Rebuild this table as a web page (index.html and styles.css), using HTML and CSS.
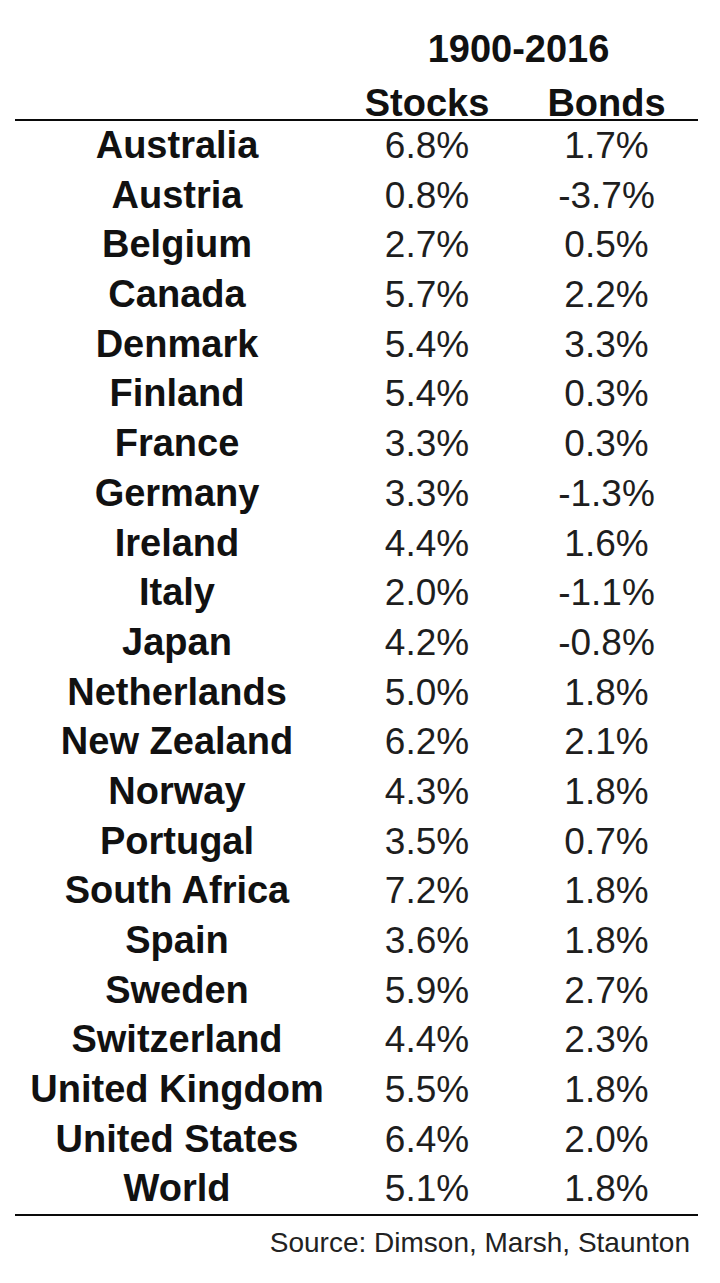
FILE: index.html
```html
<!DOCTYPE html>
<html lang="en">
<head>
<meta charset="utf-8">
<title>Real returns 1900-2016</title>
<link rel="stylesheet" href="styles.css">
</head>
<body>
<div class="sheet">
  <div class="head">
    <div class="period">1900-2016</div>
    <div class="colname">Stocks</div>
    <div class="colname">Bonds</div>
  </div>
  <div class="body">
    <div class="country">Australia</div><div class="val">6.8%</div><div class="val">1.7%</div>
    <div class="country">Austria</div><div class="val">0.8%</div><div class="val">-3.7%</div>
    <div class="country">Belgium</div><div class="val">2.7%</div><div class="val">0.5%</div>
    <div class="country">Canada</div><div class="val">5.7%</div><div class="val">2.2%</div>
    <div class="country">Denmark</div><div class="val">5.4%</div><div class="val">3.3%</div>
    <div class="country">Finland</div><div class="val">5.4%</div><div class="val">0.3%</div>
    <div class="country">France</div><div class="val">3.3%</div><div class="val">0.3%</div>
    <div class="country">Germany</div><div class="val">3.3%</div><div class="val">-1.3%</div>
    <div class="country">Ireland</div><div class="val">4.4%</div><div class="val">1.6%</div>
    <div class="country">Italy</div><div class="val">2.0%</div><div class="val">-1.1%</div>
    <div class="country">Japan</div><div class="val">4.2%</div><div class="val">-0.8%</div>
    <div class="country">Netherlands</div><div class="val">5.0%</div><div class="val">1.8%</div>
    <div class="country">New Zealand</div><div class="val">6.2%</div><div class="val">2.1%</div>
    <div class="country">Norway</div><div class="val">4.3%</div><div class="val">1.8%</div>
    <div class="country">Portugal</div><div class="val">3.5%</div><div class="val">0.7%</div>
    <div class="country">South Africa</div><div class="val">7.2%</div><div class="val">1.8%</div>
    <div class="country">Spain</div><div class="val">3.6%</div><div class="val">1.8%</div>
    <div class="country">Sweden</div><div class="val">5.9%</div><div class="val">2.7%</div>
    <div class="country">Switzerland</div><div class="val">4.4%</div><div class="val">2.3%</div>
    <div class="country">United Kingdom</div><div class="val">5.5%</div><div class="val">1.8%</div>
    <div class="country">United States</div><div class="val">6.4%</div><div class="val">2.0%</div>
    <div class="country">World</div><div class="val">5.1%</div><div class="val">1.8%</div>
  </div>
  <div class="source">Source: Dimson, Marsh, Staunton</div>
</div>
</body>
</html>
```
FILE: styles.css
```css
html, body {
  margin: 0;
  padding: 0;
  background: #ffffff;
}

.sheet {
  width: 683px;
  margin-left: 15px;
  padding-top: 25px;
  font-family: "Liberation Sans", Arial, sans-serif;
  color: #111111;
}

.head {
  display: grid;
  grid-template-columns: 324px 176px 183px;
  row-gap: 14px;
  font-weight: bold;
  font-size: 38px;
  text-align: center;
  border-bottom: 2px solid #0a0a0a;
}

.period {
  grid-column: 2 / 4;
  line-height: 48px;
}

.colname {
  line-height: 32px;
}

.colname:nth-child(2) {
  grid-column: 2;
}

.body {
  display: grid;
  grid-template-columns: 324px 176px 183px;
  grid-auto-rows: 49.7px;
  text-align: center;
  border-bottom: 2px solid #0a0a0a;
}

.country {
  font-weight: bold;
  font-size: 38px;
  line-height: 49.7px;
  color: #111111;
}

.val {
  font-size: 37px;
  line-height: 49.7px;
  color: #1e1e1e;
}

.source {
  margin-top: 11px;
  padding-right: 8px;
  text-align: right;
  font-size: 28px;
  line-height: 32px;
  color: #222222;
}
```
